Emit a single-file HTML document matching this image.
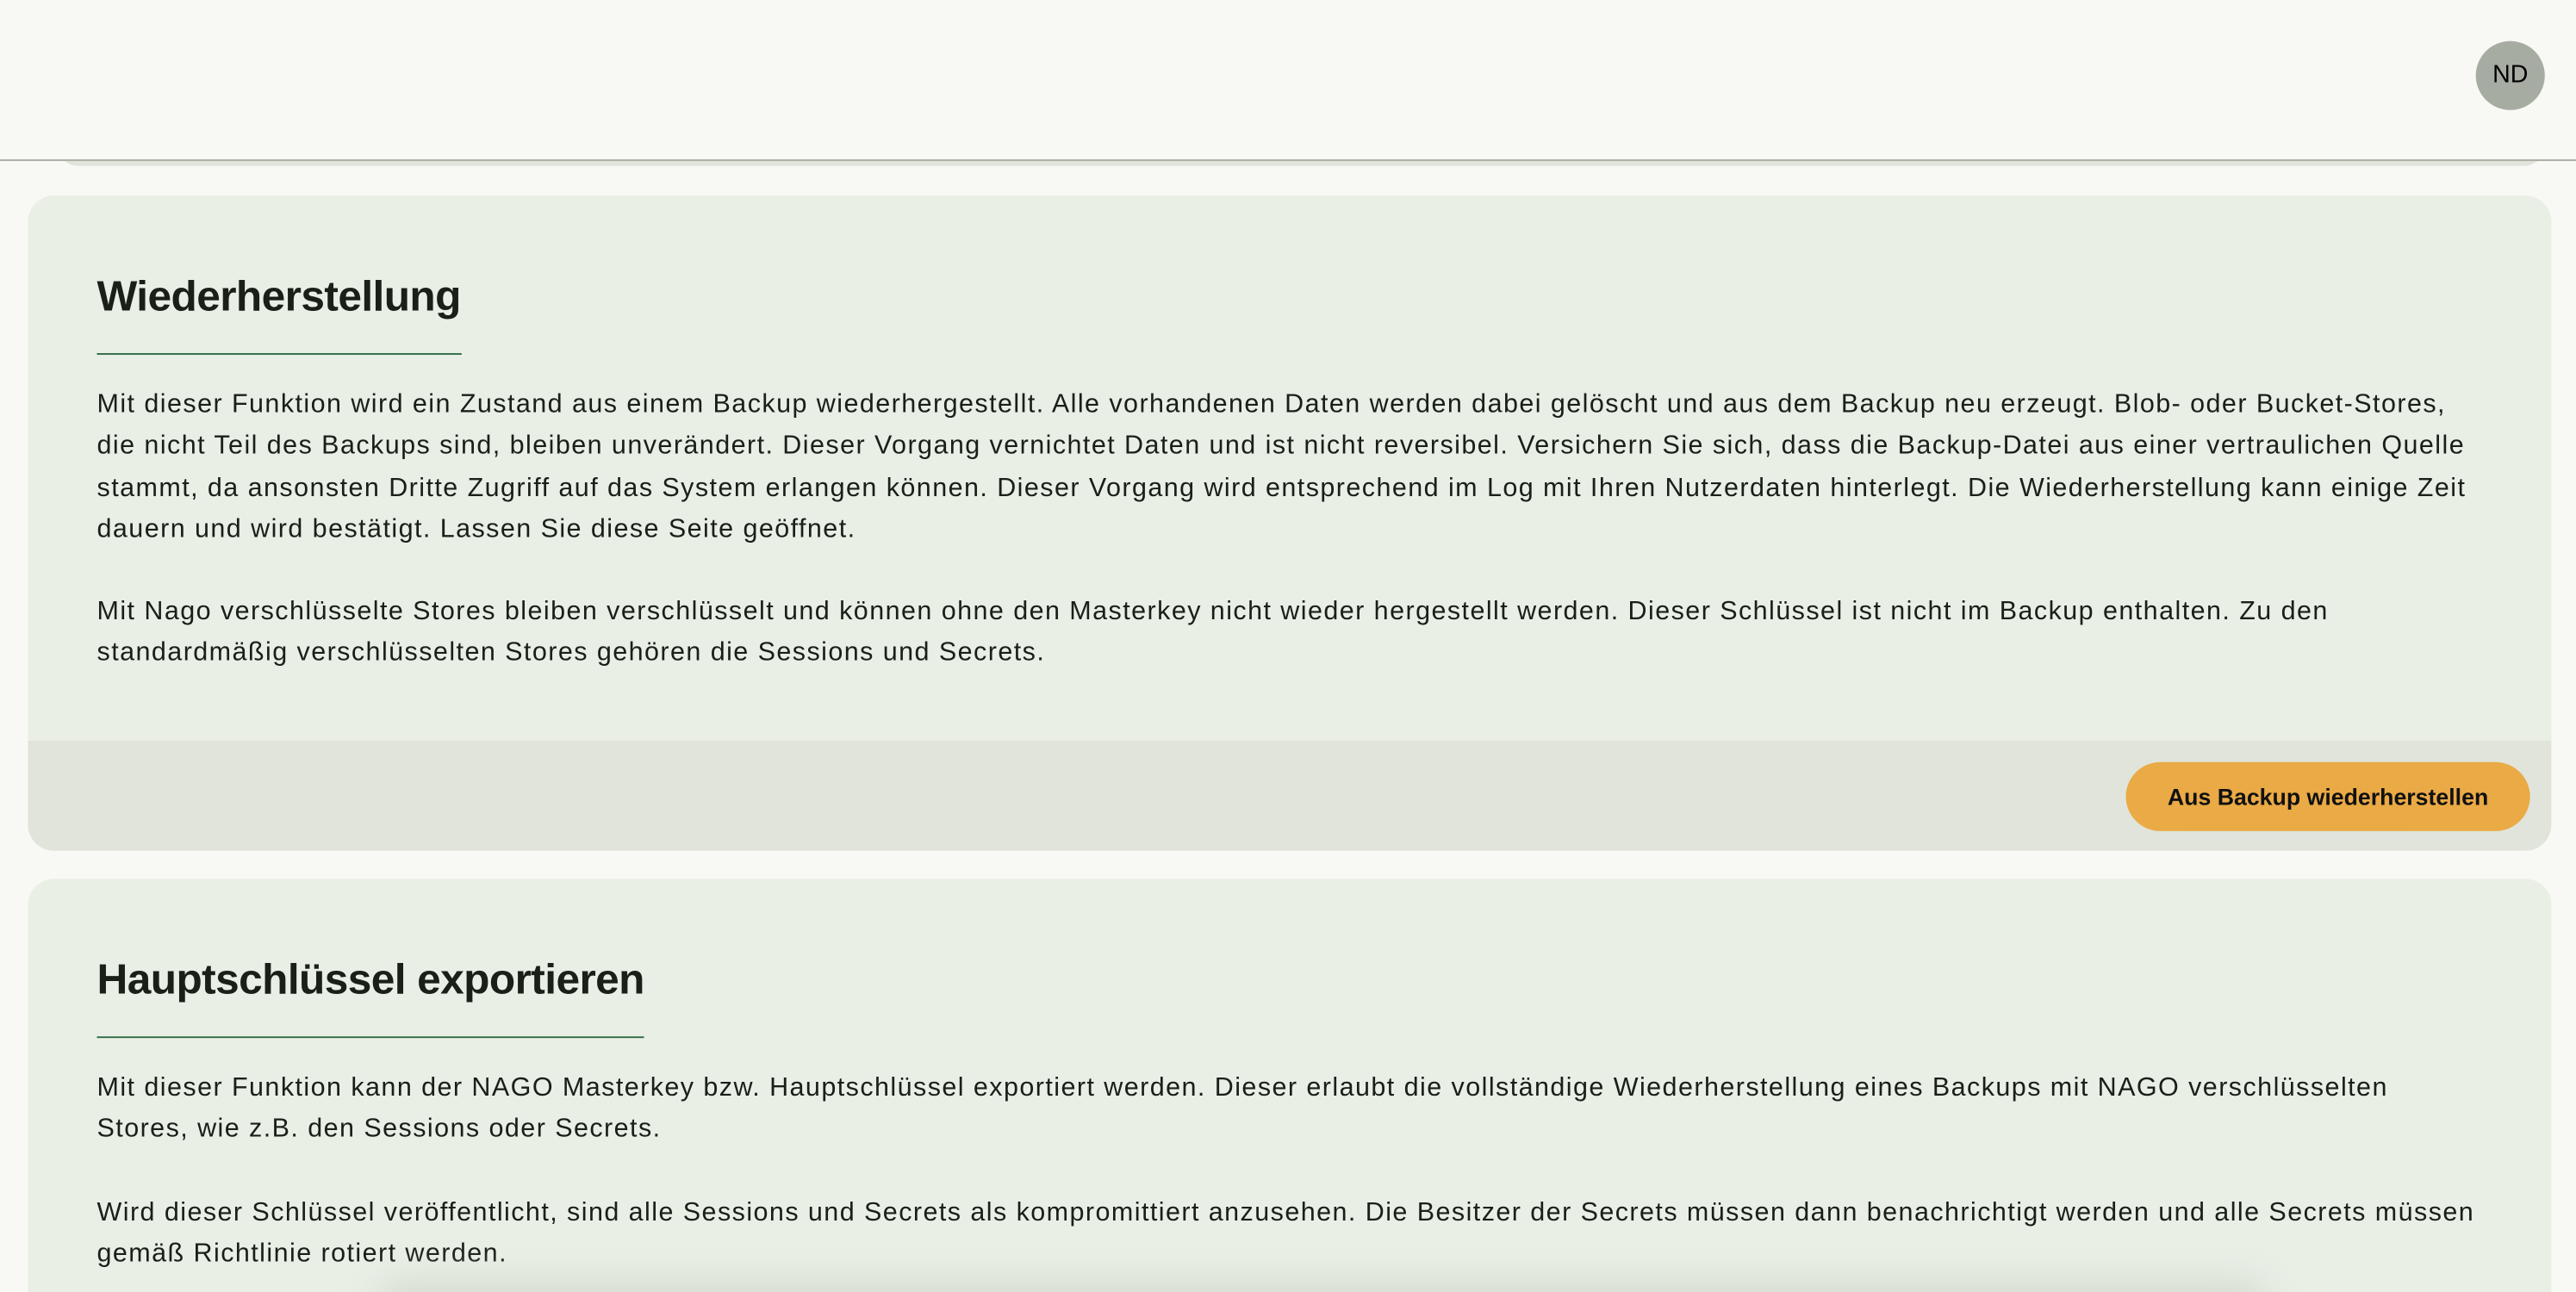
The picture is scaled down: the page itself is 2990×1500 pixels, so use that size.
<!DOCTYPE html>
<html><head><meta charset="utf-8"><style>
html,body{margin:0;padding:0;background:#f8f9f4;overflow:hidden}
body{width:2990px;height:1500px;position:relative}
#w{position:absolute;left:0;top:0;width:1568px;height:787px;overflow:hidden;transform:scale(1.9069);transform-origin:0 0;font-family:"Liberation Sans",sans-serif;color:#1a1f18}
.hdr{position:absolute;left:0;top:0;width:1568px;height:97px;background:#f8f9f4;border-bottom:1px solid #a7aba2;z-index:2}
.av{position:absolute;left:1507px;top:25px;width:42px;height:42px;border-radius:50%;background:#a7aca3;font-size:15px;line-height:42px;text-align:center;color:#000}
.prev{position:absolute;left:34px;top:60px;width:1516px;height:41px;background:#e0e4da;border-radius:0 0 14px 14px}
.card{position:absolute;left:17px;width:1536px;background:#e9efe5;border-radius:16px;overflow:hidden}
.in{padding:0 42px}
h2{margin:0;font-size:26px;font-weight:bold;display:inline-block;padding-bottom:19px;border-bottom:1px solid #2f6b45;letter-spacing:-0.3px}
p{margin:0 0 25px;font-size:16px;line-height:25.3px;letter-spacing:0.75px;white-space:nowrap}
.foot{position:absolute;left:0;bottom:0;width:100%;height:67px;background:#e0e4da}
.btn{position:absolute;right:13px;top:13px;width:246px;height:42px;border-radius:21px;background:#eaaa45;font-size:14px;font-weight:bold;line-height:42px;text-align:center;color:#111}
.sh{position:absolute;left:230px;top:780px;width:1150px;height:30px;border-radius:20px;background:#d6dbd1;filter:blur(10px)}
</style></head><body><div id="w">
<div class="prev"></div>
<div class="hdr"><div class="av">ND</div></div>
<div class="card" style="top:119px;height:399px">
<div class="in" style="padding-top:46px">
<h2>Wiederherstellung</h2>
<div style="height:18px"></div>
<p>Mit dieser Funktion wird ein Zustand aus einem Backup wiederhergestellt. Alle vorhandenen Daten werden dabei gelöscht und aus dem Backup neu erzeugt. Blob- oder Bucket-Stores,<br>die nicht Teil des Backups sind, bleiben unverändert. Dieser Vorgang vernichtet Daten und ist nicht reversibel. Versichern Sie sich, dass die Backup-Datei aus einer vertraulichen Quelle<br>stammt, da ansonsten Dritte Zugriff auf das System erlangen können. Dieser Vorgang wird entsprechend im Log mit Ihren Nutzerdaten hinterlegt. Die Wiederherstellung kann einige Zeit<br>dauern und wird bestätigt. Lassen Sie diese Seite geöffnet.</p>
<p>Mit Nago verschlüsselte Stores bleiben verschlüsselt und können ohne den Masterkey nicht wieder hergestellt werden. Dieser Schlüssel ist nicht im Backup enthalten. Zu den<br>standardmäßig verschlüsselten Stores gehören die Sessions und Secrets.</p>
</div>
<div class="foot"><div class="btn">Aus Backup wiederherstellen</div></div>
</div>
<div class="card" style="top:535px;height:300px">
<div class="in" style="padding-top:46px">
<h2>Hauptschlüssel exportieren</h2>
<div style="height:18px"></div>
<p>Mit dieser Funktion kann der NAGO Masterkey bzw. Hauptschlüssel exportiert werden. Dieser erlaubt die vollständige Wiederherstellung eines Backups mit NAGO verschlüsselten<br>Stores, wie z.B. den Sessions oder Secrets.</p>
<p>Wird dieser Schlüssel veröffentlicht, sind alle Sessions und Secrets als kompromittiert anzusehen. Die Besitzer der Secrets müssen dann benachrichtigt werden und alle Secrets müssen<br>gemäß Richtlinie rotiert werden.</p>
</div>
</div>
<div class="sh"></div>
</div></body></html>
